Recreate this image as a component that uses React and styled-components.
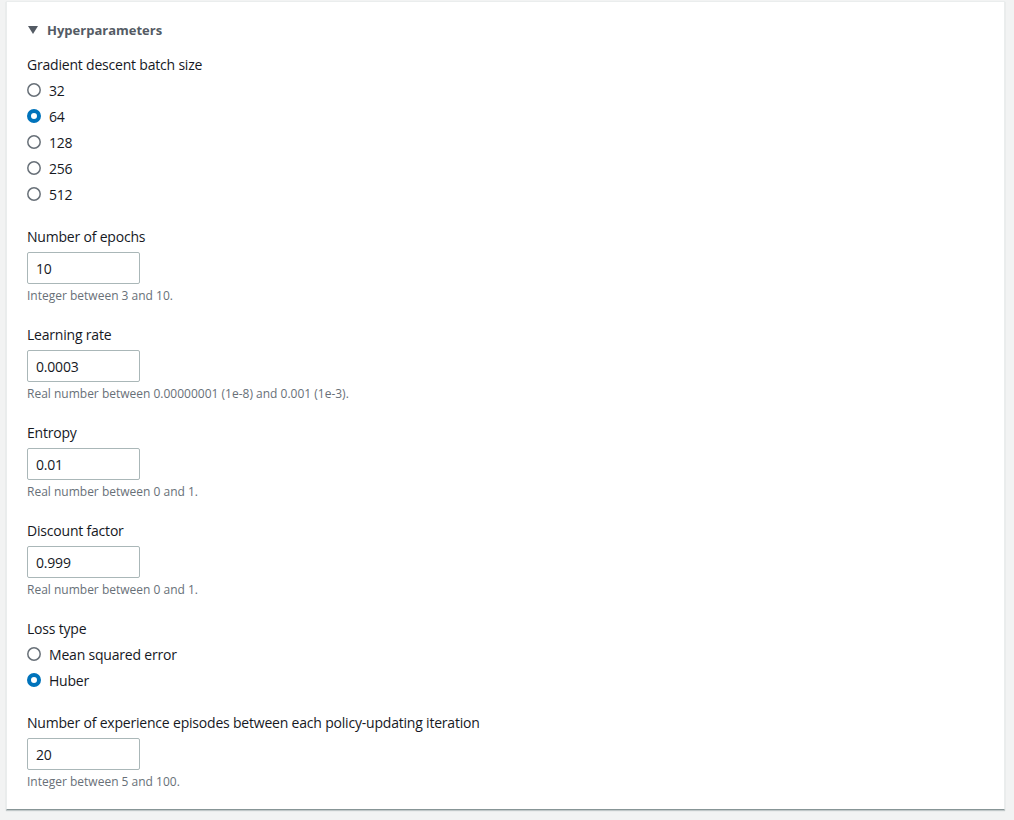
import React from "react";
import styled, { createGlobalStyle } from "styled-components";

const GlobalStyle = createGlobalStyle`
  body {
    margin: 0;
    background: #f2f3f3;
    font-family: "Open Sans", Roboto, Arial, sans-serif;
    color: #16191f;
  }
`;

const Page = styled.div`
  padding: 1px 9px 10px 6px;
`;

const Card = styled.div`
  background: #ffffff;
  border: 1px solid #eaeded;
  border-bottom: 1px solid #879596;
  box-shadow: 0 1px 1px 0 rgba(0, 28, 36, 0.2);
  padding: 18px 20px 19px 20px;
`;

const Header = styled.div`
  display: flex;
  align-items: center;
  gap: 9px;
  height: 20px;
  font-size: 13px;
  font-weight: 700;
  color: #545b64;
  padding-left: 1px;
`;

const Body = styled.div`
  display: flex;
  flex-direction: column;
  gap: 20px;
  margin-top: 14px;
`;

const Field = styled.div`
  display: flex;
  flex-direction: column;
`;

const Label = styled.div`
  font-size: 14px;
  line-height: 22px;
  letter-spacing: -0.2px;
  color: #16191f;
`;

const RadioList = styled.div`
  display: flex;
  flex-direction: column;
  gap: 2px;
  margin-top: 2px;
`;

const RadioRow = styled.label`
  display: flex;
  align-items: center;
  gap: 8px;
  height: 24px;
  font-size: 14px;
  letter-spacing: -0.2px;
  color: #16191f;
`;

const Input = styled.input`
  box-sizing: border-box;
  width: 113px;
  height: 32px;
  margin-top: 4px;
  border: 1px solid #aab7b8;
  border-radius: 2px;
  padding: 0 8px;
  font-family: inherit;
  font-size: 14px;
  letter-spacing: -0.2px;
  color: #16191f;
  outline: none;
`;

const Hint = styled.div`
  margin-top: 4px;
  font-size: 12px;
  line-height: 16px;
  color: #687078;
`;

const Caret = () => (
  <svg width="10" height="8" viewBox="0 0 10 8">
    <path d="M0 0 L10 0 L5 8 Z" fill="#545b64" />
  </svg>
);

const RadioDot = ({ checked }) => (
  <svg width="14" height="14" viewBox="0 0 14 14">
    {checked ? (
      <circle cx="7" cy="7" r="5" fill="#ffffff" stroke="#0073bb" strokeWidth="4" />
    ) : (
      <circle cx="7" cy="7" r="6.2" fill="#ffffff" stroke="#687078" strokeWidth="1.5" />
    )}
  </svg>
);

const RadioGroup = ({ label, options, value }) => (
  <Field>
    <Label>{label}</Label>
    <RadioList>
      {options.map((o) => (
        <RadioRow key={o}>
          <RadioDot checked={o === value} />
          {o}
        </RadioRow>
      ))}
    </RadioList>
  </Field>
);

const TextField = ({ label, value, hint }) => (
  <Field>
    <Label>{label}</Label>
    <Input defaultValue={value} />
    <Hint>{hint}</Hint>
  </Field>
);

export default function App() {
  return (
    <Page>
      <GlobalStyle />
      <Card>
        <Header>
          <Caret />
          Hyperparameters
        </Header>
        <Body>
          <RadioGroup
            label="Gradient descent batch size"
            options={["32", "64", "128", "256", "512"]}
            value="64"
          />
          <TextField label="Number of epochs" value="10" hint="Integer between 3 and 10." />
          <TextField
            label="Learning rate"
            value="0.0003"
            hint="Real number between 0.00000001 (1e-8) and 0.001 (1e-3)."
          />
          <TextField label="Entropy" value="0.01" hint="Real number between 0 and 1." />
          <TextField label="Discount factor" value="0.999" hint="Real number between 0 and 1." />
          <RadioGroup
            label="Loss type"
            options={["Mean squared error", "Huber"]}
            value="Huber"
          />
          <TextField
            label="Number of experience episodes between each policy-updating iteration"
            value="20"
            hint="Integer between 5 and 100."
          />
        </Body>
      </Card>
    </Page>
  );
}
